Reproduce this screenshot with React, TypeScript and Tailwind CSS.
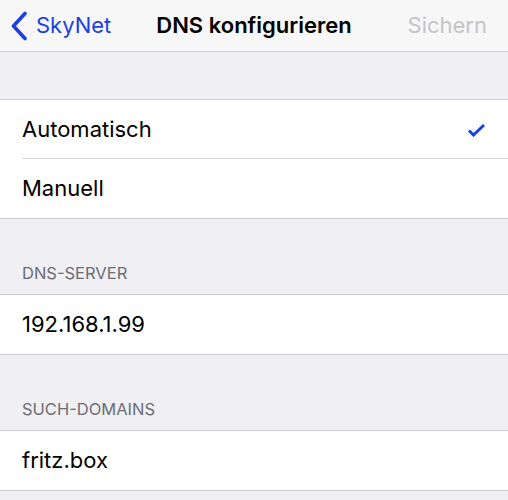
const font = { fontFamily: 'Inter, "Liberation Sans", sans-serif' }

function Row({ label, checked, last }: { label: string; checked?: boolean; last?: boolean }) {
  return (
    <div className="flex h-[59px] items-center pl-[22px]">
      <div className={`flex h-full flex-1 items-center pr-[22px] ${last ? '' : 'border-b border-[#d6d6da]'}`}>
        <span className="flex-1 text-[22px] text-black">{label}</span>
        {checked && (
          <svg width="19" height="14" viewBox="0 0 19 14" className="mt-[1px]">
            <path d="M2 7.5 L6.5 12 L17 2" fill="none" stroke="#1b3fe0" strokeWidth="3" />
          </svg>
        )}
      </div>
    </div>
  )
}

function Section({ title, children }: { title?: string; children: React.ReactNode }) {
  return (
    <>
      {title ? (
        <div className="flex h-[75px] items-end pb-[8px] pl-[22px] text-[16.5px] text-[#6d6d72]">{title}</div>
      ) : (
        <div className="h-[47px]" />
      )}
      <div className="border-y border-[#cfcfd3] bg-white">{children}</div>
    </>
  )
}

export default function App() {
  return (
    <div className="h-[500px] w-[508px] overflow-hidden bg-[#efeff4]" style={font}>
      <div className="relative flex h-[52px] items-center justify-between border-b border-[#cfcfd3] bg-[#f7f7f8] px-[10px]">
        <div className="flex items-center gap-[8px] text-[#1b3fe0]">
          <svg width="18" height="30" viewBox="0 0 18 30">
            <path d="M15 2.5 L3.5 15 L15 27.5" fill="none" stroke="#1b3fe0" strokeWidth="3.6" strokeLinecap="round" strokeLinejoin="round" />
          </svg>
          <span className="text-[22px]">SkyNet</span>
        </div>
        <span className="absolute left-1/2 -translate-x-1/2 text-[22px] font-semibold text-black">DNS konfigurieren</span>
        <span className="pr-[11px] text-[22px] text-[#c4c4c7]">Sichern</span>
      </div>
      <Section>
        <Row label="Automatisch" checked />
        <Row label="Manuell" last />
      </Section>
      <Section title="DNS-SERVER">
        <Row label="192.168.1.99" last />
      </Section>
      <Section title="SUCH-DOMAINS">
        <Row label="fritz.box" last />
      </Section>
    </div>
  )
}
